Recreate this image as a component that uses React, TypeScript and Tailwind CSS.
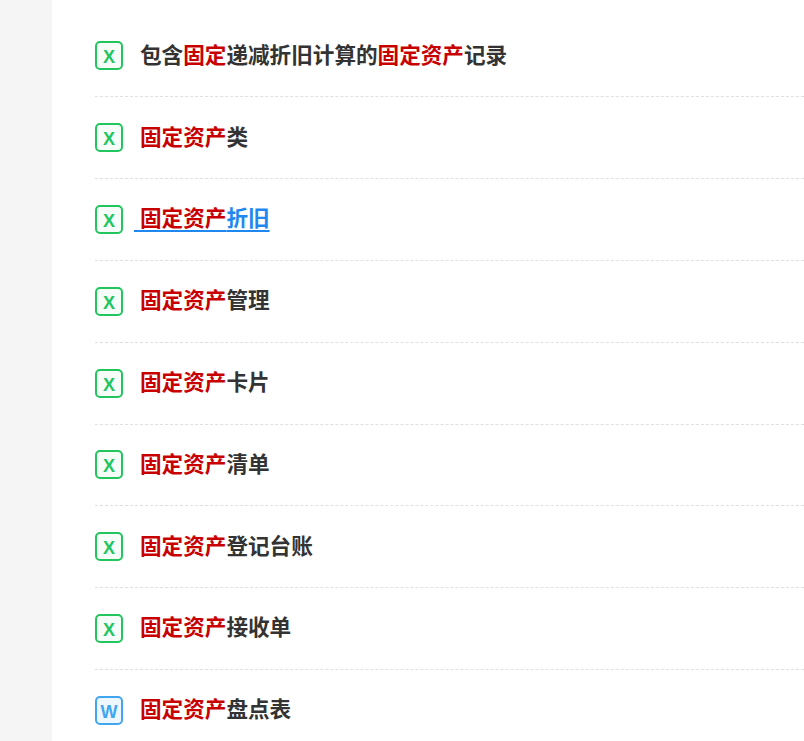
const rows = [
  { type: "x", parts: [["包含", 0], ["固定", 1], ["递减折旧计算的", 0], ["固定资产", 1], ["记录", 0]] },
  { type: "x", parts: [["固定资产", 1], ["类", 0]] },
  { type: "x", link: true, parts: [["固定资产", 1], ["折旧", 0]] },
  { type: "x", parts: [["固定资产", 1], ["管理", 0]] },
  { type: "x", parts: [["固定资产", 1], ["卡片", 0]] },
  { type: "x", parts: [["固定资产", 1], ["清单", 0]] },
  { type: "x", parts: [["固定资产", 1], ["登记台账", 0]] },
  { type: "x", parts: [["固定资产", 1], ["接收单", 0]] },
  { type: "w", parts: [["固定资产", 1], ["盘点表", 0]] },
]

function FileIcon({ type }: { type: string }) {
  const color = type === "x" ? "border-[#22c55e] text-[#22c55e] bg-[#f6fdf8]" : "border-[#42a5f0] text-[#42a5f0] bg-[#eef7fe]"
  return (
    <span className={`w-7 h-[29px] shrink-0 rounded-[5px] border-2 flex items-end justify-center text-[18px] leading-[22px] font-['Liberation_Sans',sans-serif] font-bold ${color}`}>
      {type === "x" ? "X" : "W"}
    </span>
  )
}

export default function App() {
  return (
    <div className="h-[741px] overflow-hidden bg-[#f5f5f5] pl-[52px] font-['Liberation_Sans','Noto_Sans_CJK_SC',sans-serif]">
      <div className="bg-white h-full pl-[43px] pt-[15.6px]">
        {rows.map((row, i) => (
          <div key={i} className="h-[81.8px] flex items-center border-b border-dashed border-[#e0e0e0]">
            <FileIcon type={row.type} />
            {row.link ? (
              <span className="ml-[11px] text-[21.6px] font-bold text-[#1e88f0] underline decoration-2 underline-offset-[4px] whitespace-pre">
                {" "}
                {row.parts.map(([text, red], j) => (
                  <span key={j} className={red ? "text-[#c80000]" : ""}>{text}</span>
                ))}
              </span>
            ) : (
              <span className="ml-[17px] text-[21.6px] font-bold text-[#333333]">
                {row.parts.map(([text, red], j) => (
                  <span key={j} className={red ? "text-[#c80000]" : ""}>{text}</span>
                ))}
              </span>
            )}
          </div>
        ))}
      </div>
    </div>
  )
}
